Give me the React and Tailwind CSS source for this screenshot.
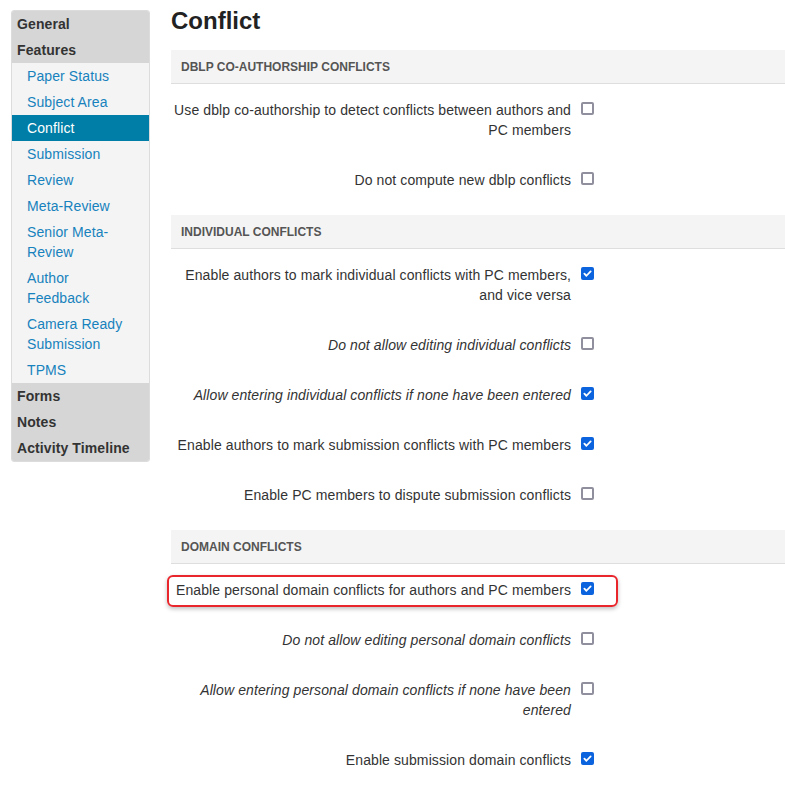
import React from 'react';

const nav = [
    { label: 'General', head: true },
    { label: 'Features', head: true },
    { label: 'Paper Status' },
    { label: 'Subject Area' },
    { label: 'Conflict', active: true },
    { label: 'Submission' },
    { label: 'Review' },
    { label: 'Meta-Review' },
    { label: 'Senior Meta-Review' },
    { label: 'Author Feedback' },
    { label: 'Camera Ready Submission' },
    { label: 'TPMS' },
    { label: 'Forms', head: true },
    { label: 'Notes', head: true },
    { label: 'Activity Timeline', head: true },
];

const sections = [
    {
        title: 'DBLP Co-Authorship Conflicts',
        rows: [
            { text: 'Use dblp co-authorship to detect conflicts between authors and PC members', checked: false },
            { text: 'Do not compute new dblp conflicts', checked: false },
        ],
    },
    {
        title: 'Individual Conflicts',
        rows: [
            { text: 'Enable authors to mark individual conflicts with PC members, and vice versa', checked: true },
            { text: 'Do not allow editing individual conflicts', checked: false, italic: true },
            { text: 'Allow entering individual conflicts if none have been entered', checked: true, italic: true },
            { text: 'Enable authors to mark submission conflicts with PC members', checked: true },
            { text: 'Enable PC members to dispute submission conflicts', checked: false },
        ],
    },
    {
        title: 'Domain Conflicts',
        rows: [
            { text: 'Enable personal domain conflicts for authors and PC members', checked: true, highlight: true },
            { text: 'Do not allow editing personal domain conflicts', checked: false, italic: true },
            { text: 'Allow entering personal domain conflicts if none have been entered', checked: false, italic: true },
            { text: 'Enable submission domain conflicts', checked: true },
        ],
    },
];

function Checkbox({ checked }) {
    if (checked) {
        return (
            <span className="mt-[2px] ml-[10px] flex h-[13px] w-[13px] shrink-0 items-center justify-center rounded-[2px] bg-[#0b63dd]">
                <svg width="9" height="9" viewBox="0 0 10 10" fill="none">
                    <path d="M1.5 5.2l2.3 2.3L8.5 2.6" stroke="white" strokeWidth="2" strokeLinecap="round" strokeLinejoin="round" />
                </svg>
            </span>
        );
    }
    return <span className="mt-[2px] ml-[10px] h-[13px] w-[13px] shrink-0 rounded-[2px] border-2 border-[#8f8f9d] bg-white" />;
}

export default function App() {
    return (
        <div className="flex min-h-[790px] bg-white pl-[11px] text-[14px] tracking-[0.1px] text-[#333] font-['Liberation_Sans',Arial,sans-serif]">
            <div className="mt-[10px] w-[139px] self-start overflow-hidden rounded-[3px] border border-[#dcdcdc] bg-[#f4f4f4]">
                {nav.map((item) => (
                    <div
                        key={item.label}
                        className={
                            item.head
                                ? 'bg-[#d6d6d6] px-[5px] py-[3px] font-bold leading-[20px] text-[#333]'
                                : item.active
                                ? 'bg-[#007ea7] py-[3px] pl-[15px] pr-[22px] leading-[20px] text-white'
                                : 'py-[3px] pl-[15px] pr-[22px] leading-[20px] text-[#1782bd]'
                        }
                    >
                        {item.label}
                    </div>
                ))}
            </div>

            <div className="ml-[21px] flex-1 pt-[7px]">
                <h1 className="mb-[15px] text-[24px] font-bold leading-[28px] tracking-normal text-[#222]">Conflict</h1>

                {sections.map((sec) => (
                    <div key={sec.title}>
                        <div className="h-[34px] border-b border-[#dedede] bg-[#f4f4f4] px-[10px] text-[12px] font-bold uppercase leading-[35px] tracking-normal text-[#555]">
                            {sec.title}
                        </div>
                        <div className="flex flex-col gap-[30px] pt-[16px] pb-[25px]">
                            {sec.rows.map((row) => (
                                <div key={row.text} className="relative flex w-[423px] items-start">
                                    {row.highlight && (
                                        <span className="absolute -top-[5px] -bottom-[7px] -left-[4px] -right-[24px] rounded-[6px] border-2 border-[#e8262b] shadow-[0_2px_4px_rgba(0,0,0,0.25)]" />
                                    )}
                                    <label className={`w-[400px] text-right leading-[20px] ${row.italic ? 'italic' : ''}`}>
                                        {row.text}
                                    </label>
                                    <Checkbox checked={row.checked} />
                                </div>
                            ))}
                        </div>
                    </div>
                ))}
            </div>
        </div>
    );
}
